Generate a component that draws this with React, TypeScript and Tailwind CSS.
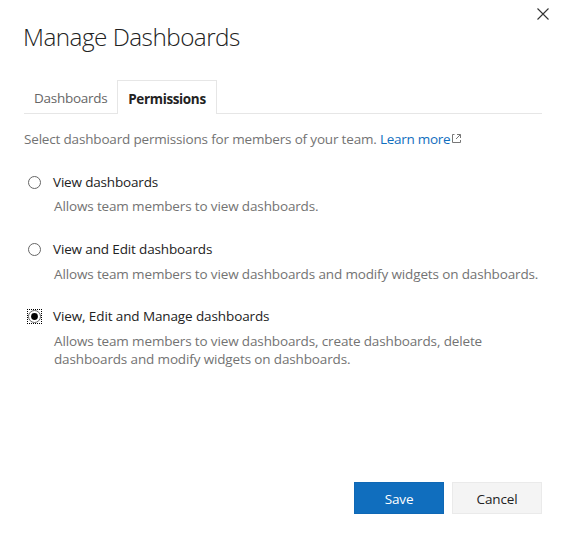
import React from "react";

type Option = { title: string; lines: string[]; checked?: boolean; tracking: string; gap: string };

const options: Option[] = [
  {
    title: "View dashboards",
    lines: ["Allows team members to view dashboards."],
    tracking: "tracking-[-0.17px]",
    gap: "pt-[6px]",
  },
  {
    title: "View and Edit dashboards",
    lines: ["Allows team members to view dashboards and modify widgets on dashboards."],
    tracking: "tracking-[-0.14px]",
    gap: "pt-[7px]",
  },
  {
    title: "View, Edit and Manage dashboards",
    lines: ["Allows team members to view dashboards, create dashboards, delete", "dashboards and modify widgets on dashboards."],
    checked: true,
    tracking: "tracking-[-0.11px]",
    gap: "pt-[7px]",
  },
];

function Radio({ checked }: { checked?: boolean }) {
  return (
    <svg width="15" height="15" viewBox="0 0 15 15" className="mr-[11px] shrink-0" fill="none">
      {checked && (
        <g stroke="#000" strokeDasharray="1 1" shapeRendering="crispEdges">
          <path d="M0 .5H15M0 14.5H15M.5 0V15M14.5 0V15" />
        </g>
      )}
      <circle cx="7.5" cy="7.5" r="6" stroke="#666" />
      {checked && <circle cx="7.5" cy="7.5" r="3.4" fill="#000" />}
    </svg>
  );
}

export default function App() {
  return (
    <div className="flex h-[538px] w-[567px] flex-col bg-white pl-6 pr-[25px] font-['Open_Sans','Noto_Sans',sans-serif] text-[13.5px] tracking-[-0.14px] text-[#737373]">
      <header className="flex h-20 justify-between">
        <h1 className="-ml-px pt-[20px] text-[24.3px] font-light leading-[34px] tracking-[-0.53px] text-[#222]">Manage Dashboards</h1>
        <button aria-label="Close" className="-mr-[7px] mt-[8px] h-3 w-3">
          <svg width="12" height="12" viewBox="0 0 12 12" stroke="#333" strokeWidth="1.1">
            <path d="M.5.5 11.5 11.5M11.5.5.5 11.5" />
          </svg>
        </button>
      </header>

      <nav className="flex h-[34px] shrink-0">
        <div className="flex w-[93px] items-center border-b border-[#e6e6e6] pl-[10px] pt-[4px] tracking-[-0.27px] text-[#666]">Dashboards</div>
        <div className="flex w-[100px] items-center justify-center border border-b-0 border-[#e6e6e6] pt-[4px] font-bold tracking-[-0.36px] text-[#222]">
          Permissions
        </div>
        <div className="flex-1 border-b border-[#e6e6e6]" />
      </nav>

      <p className="flex h-[59px] shrink-0 whitespace-pre pt-[16px] leading-[18px] tracking-[-0.175px]">
        <span>Select dashboard permissions for members of your team. </span>
        <a className="tracking-[-0.28px] text-[#106ebe]">Learn more</a>
        <svg width="9" height="9" viewBox="0 0 9 9" fill="none" stroke="#777" className="ml-[2px] mt-[4px]">
          <path d="M2.5 .5H.5V8.5H8.5V6M5 .5H8.5V4M8.3.7 4 5" />
        </svg>
      </p>

      {options.map((o) => (
        <section key={o.title} className="h-[67px] shrink-0 whitespace-nowrap pl-[3px] leading-[18px]">
          <label className="flex items-center text-[#222]">
            <Radio checked={o.checked} />
            <span className={o.tracking}>{o.title}</span>
          </label>
          <div className={`${o.gap} pl-[27px]`}>
            {o.lines.map((l) => (
              <div key={l}>
                <span>{l}</span>
              </div>
            ))}
          </div>
        </section>
      ))}

      <footer className="mb-6 mt-auto flex h-8 justify-end gap-2 text-[#222]">
        <button className="w-[90px] border border-[#0f68b5] bg-[#106ebe] pt-[3px] text-white">Save</button>
        <button className="w-[90px] border border-[#eaeaea] bg-[#f4f4f4] pt-[3px]">Cancel</button>
      </footer>
    </div>
  );
}
